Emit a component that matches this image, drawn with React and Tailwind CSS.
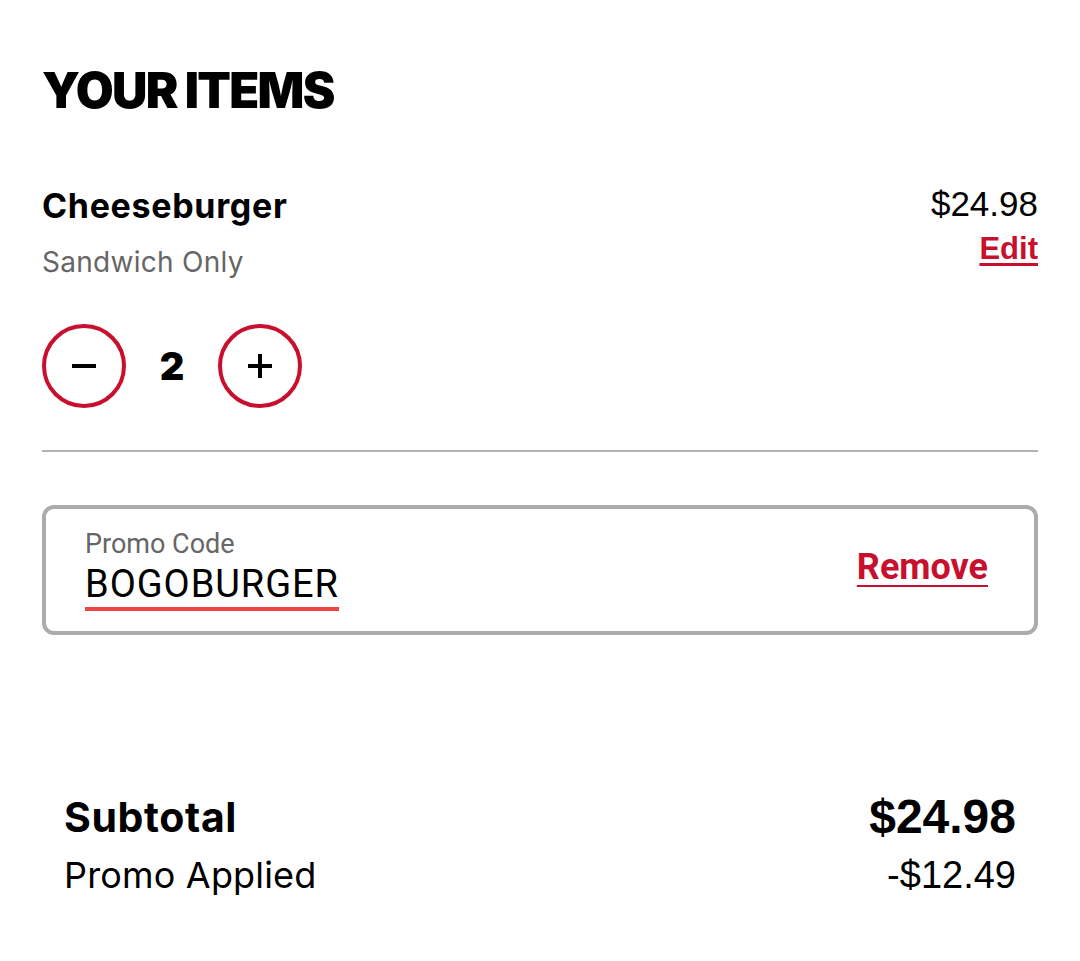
import React, { useState } from "react";

const red = "text-[#c8102e]";

function QtyButton({ children, onClick }) {
  return (
    <button
      onClick={onClick}
      className="w-[84px] h-[84px] rounded-full border-[4px] border-[#c8102e] flex items-center justify-center"
    >
      {children}
    </button>
  );
}

export default function App() {
  const [qty, setQty] = useState(2);

  return (
    <div className="w-[1080px] h-[961px] bg-white px-[42px] pt-[66px] font-['Inter',sans-serif] text-black">
      {/* heading */}
      <h1 className="text-[49px] leading-[50px] font-black tracking-[-0.035em]">
        YOUR ITEMS
      </h1>

      {/* item row */}
      <div className="flex justify-between mt-[70px]">
        <div>
          <div className="text-[34px] leading-[40px] font-bold tracking-[0.02em]">
            Cheeseburger
          </div>
          <div className="text-[28px] leading-[36px] text-[#666] mt-[18px] tracking-[0.01em]">
            Sandwich Only
          </div>
        </div>
        <div className="flex flex-col items-end font-['Liberation_Sans',sans-serif]">
          <div className="text-[35px] leading-[36px]">$24.98</div>
          <button className={`text-[31px] leading-[36px] font-bold underline underline-offset-[4px] decoration-[3px] ${red} mt-[9px]`}>
            Edit
          </button>
        </div>
      </div>

      {/* quantity */}
      <div className="flex items-center mt-[44px]">
        <QtyButton onClick={() => setQty(Math.max(1, qty - 1))}>
          <svg width="28" height="28" viewBox="0 0 28 28">
            <path d="M2 14h24" stroke="black" strokeWidth="4" />
          </svg>
        </QtyButton>
        <div className="w-[92px] text-center text-[38px] font-black">{qty}</div>
        <QtyButton onClick={() => setQty(qty + 1)}>
          <svg width="28" height="28" viewBox="0 0 28 28">
            <path d="M2 14h24M14 2v24" stroke="black" strokeWidth="4" />
          </svg>
        </QtyButton>
      </div>

      <div className="h-[2px] bg-[#b3b3b3] mt-[42px]" />

      {/* promo code */}
      <div className="mt-[53px] h-[130px] border-[4px] border-[#ababab] rounded-[12px] flex items-center justify-between pl-[39px] pr-[46px]">
        <div className="font-['Roboto',sans-serif]">
          <div className="text-[27px] leading-[30px] text-[#666]">Promo Code</div>
          <div className="text-[38px] leading-[42px] tracking-[0.025em] border-b-[4px] border-[#ef4444] inline-block mt-[4px] pb-[2px]">
            BOGOBURGER
          </div>
        </div>
        <button className={`font-['Roboto',sans-serif] text-[36px] font-bold underline underline-offset-[6px] decoration-[2px] ${red} mt-[-6px]`}>
          Remove
        </button>
      </div>

      {/* totals */}
      <div className="mt-[157px] px-[22px]">
        <div className="flex justify-between items-end">
          <div className="text-[41px] leading-[50px] font-bold tracking-[0.015em]">Subtotal</div>
          <div className="text-[48px] leading-[50px] font-bold font-['Liberation_Sans',sans-serif]">
            $24.98
          </div>
        </div>
        <div className="flex justify-between items-end mt-[11px]">
          <div className="text-[36px] leading-[44px] tracking-[0.005em]">Promo Applied</div>
          <div className="text-[38px] leading-[44px] font-['Liberation_Sans',sans-serif]">
            -$12.49
          </div>
        </div>
      </div>
    </div>
  );
}
